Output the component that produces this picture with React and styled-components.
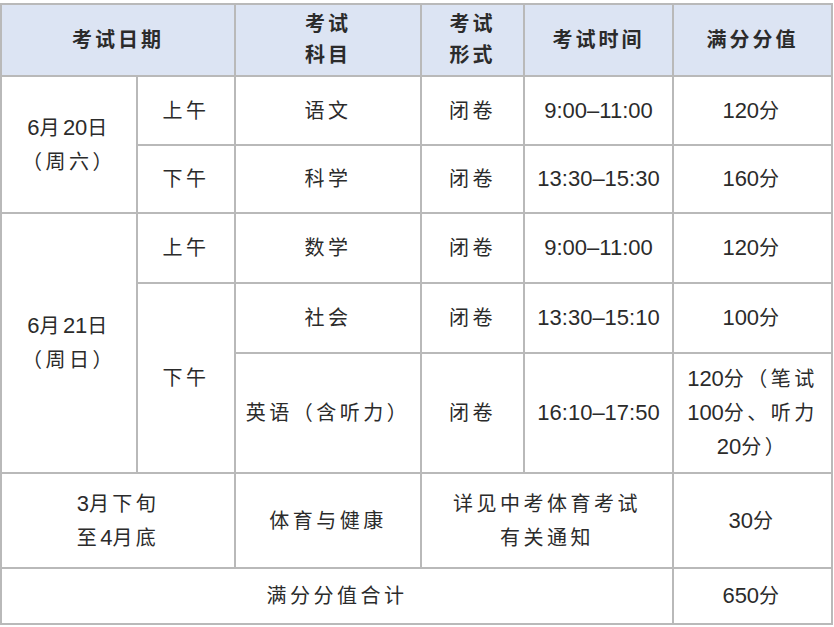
import styled, { createGlobalStyle } from "styled-components";

const Global = createGlobalStyle`
    body {
        margin: 0;
        background: #ffffff;
    }
`;

const Page = styled.div`
    padding: 3px 0 0 0;
`;

const Table = styled.table`
    width: 831px;
    border-collapse: collapse;
    table-layout: fixed;
    border: 2px solid #9a9a9a;
    font-family: "Liberation Sans", "Noto Sans CJK SC", sans-serif;
    font-size: 20px;
    color: #2b2b2b;
`;

const Row = styled.tr`
    height: ${(props) => props.h}px;
`;

const Head = styled.th`
    background-color: #dce4f3;
    border: 2px solid #b9b9b9;
    font-weight: 700;
    letter-spacing: 3px;
    line-height: 31px;
    text-align: center;
    vertical-align: middle;
    padding: 0;
`;

const Cell = styled.td`
    border: 2px solid #b9b9b9;
    text-align: center;
    vertical-align: middle;
    letter-spacing: 3.5px;
    line-height: 34px;
    padding: 0;
`;

const Num = styled.span`
    font-size: 22px;
    letter-spacing: 0;
`;

export default function App() {
    return (
        <Page>
            <Global />
            <Table>
                <colgroup>
                    <col style={{ width: 136 }} />
                    <col style={{ width: 98 }} />
                    <col style={{ width: 186 }} />
                    <col style={{ width: 103 }} />
                    <col style={{ width: 149 }} />
                    <col style={{ width: 159 }} />
                </colgroup>
                <thead>
                    <Row h={72}>
                        <Head colSpan={2}>考试日期</Head>
                        <Head>考试<br />科目</Head>
                        <Head>考试<br />形式</Head>
                        <Head>考试时间</Head>
                        <Head>满分分值</Head>
                    </Row>
                </thead>
                <tbody>
                    <Row h={69}>
                        <Cell rowSpan={2}><Num>6</Num>月<Num>20</Num>日<br />（周六）</Cell>
                        <Cell>上午</Cell>
                        <Cell>语文</Cell>
                        <Cell>闭卷</Cell>
                        <Cell><Num>9:00–11:00</Num></Cell>
                        <Cell><Num>120</Num>分</Cell>
                    </Row>
                    <Row h={68}>
                        <Cell>下午</Cell>
                        <Cell>科学</Cell>
                        <Cell>闭卷</Cell>
                        <Cell><Num>13:30–15:30</Num></Cell>
                        <Cell><Num>160</Num>分</Cell>
                    </Row>
                    <Row h={70}>
                        <Cell rowSpan={3}><Num>6</Num>月<Num>21</Num>日<br />（周日）</Cell>
                        <Cell>上午</Cell>
                        <Cell>数学</Cell>
                        <Cell>闭卷</Cell>
                        <Cell><Num>9:00–11:00</Num></Cell>
                        <Cell><Num>120</Num>分</Cell>
                    </Row>
                    <Row h={70}>
                        <Cell rowSpan={2}>下午</Cell>
                        <Cell>社会</Cell>
                        <Cell>闭卷</Cell>
                        <Cell><Num>13:30–15:10</Num></Cell>
                        <Cell><Num>100</Num>分</Cell>
                    </Row>
                    <Row h={120}>
                        <Cell>英语（含听力）</Cell>
                        <Cell>闭卷</Cell>
                        <Cell><Num>16:10–17:50</Num></Cell>
                        <Cell>
                            <Num>120</Num>分（笔试<br />
                            <Num>100</Num>分、听力<br />
                            <Num>20</Num>分）
                        </Cell>
                    </Row>
                    <Row h={95}>
                        <Cell colSpan={2}><Num>3</Num>月下旬<br />至<Num>4</Num>月底</Cell>
                        <Cell>体育与健康</Cell>
                        <Cell colSpan={2}>详见中考体育考试<br />有关通知</Cell>
                        <Cell><Num>30</Num>分</Cell>
                    </Row>
                    <Row h={56}>
                        <Cell colSpan={5}>满分分值合计</Cell>
                        <Cell><Num>650</Num>分</Cell>
                    </Row>
                </tbody>
            </Table>
        </Page>
    );
}
